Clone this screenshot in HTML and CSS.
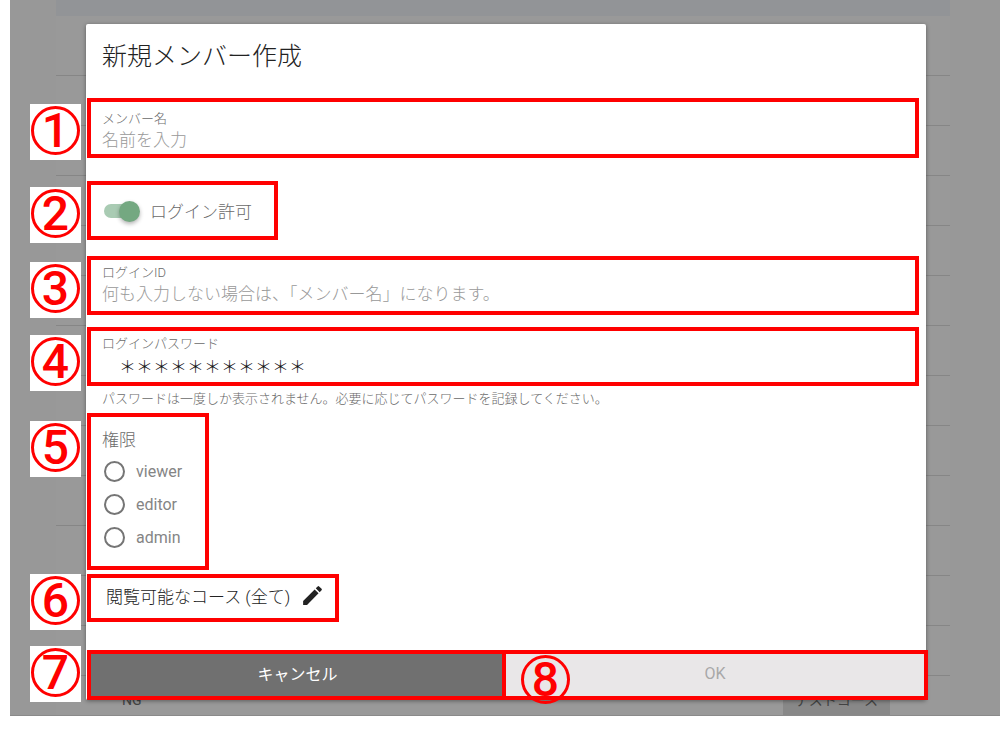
FILE: index.html
```html
<!DOCTYPE html>
<html lang="ja">
<head>
  <meta charset="utf-8">
  <title>新規メンバー作成</title>
  <link rel="stylesheet" href="styles.css">
</head>
<body>
  <div class="screen">

    <!-- member list behind the dialog -->
    <table class="members">
      <thead>
        <tr><th></th><th></th></tr>
      </thead>
      <tbody>
        <tr class="tall"><td></td><td></td></tr>
        <tr><td></td><td></td></tr>
        <tr><td></td><td></td></tr>
        <tr><td></td><td></td></tr>
        <tr><td></td><td></td></tr>
        <tr><td></td><td></td></tr>
        <tr><td></td><td></td></tr>
        <tr><td></td><td></td></tr>
        <tr><td></td><td></td></tr>
        <tr><td></td><td></td></tr>
        <tr><td></td><td></td></tr>
        <tr><td></td><td></td></tr>
        <tr><td></td><td></td></tr>
        <tr><td>NG</td><td><span class="chip">テストコース</span></td></tr>
      </tbody>
    </table>

    <form class="dialog">
      <h1>新規メンバー作成</h1>

      <div class="mark field field-name">
        <span class="badge"><span class="num">1</span></span>
        <label for="name">メンバー名</label>
        <input type="text" id="name" placeholder="名前を入力">
      </div>

      <div class="mark login">
        <span class="badge"><span class="num">2</span></span>
        <input type="checkbox" class="switch" id="login" checked>
        <label for="login">ログイン許可</label>
      </div>

      <div class="mark field">
        <span class="badge"><span class="num">3</span></span>
        <label for="login-id">ログインID</label>
        <input type="text" id="login-id" placeholder="何も入力しない場合は、「メンバー名」になります。">
      </div>

      <div class="mark field field-pass">
        <span class="badge"><span class="num">4</span></span>
        <label for="pass">ログインパスワード</label>
        <input type="text" id="pass" value="　＊＊＊＊＊＊＊＊＊＊＊">
      </div>
      <p class="note">パスワードは一度しか表示されません。必要に応じてパスワードを記録してください。</p>

      <div class="mark roles" role="radiogroup" aria-labelledby="role-title">
        <span class="badge"><span class="num">5</span></span>
        <div class="role-title" id="role-title">権限</div>
        <label><input type="radio" name="role" value="viewer">viewer</label>
        <label><input type="radio" name="role" value="editor">editor</label>
        <label><input type="radio" name="role" value="admin">admin</label>
      </div>

      <div class="mark course">
        <span class="badge"><span class="num">6</span></span>
        <span>閲覧可能なコース (全て)</span>
        <button type="button" class="edit" aria-label="編集">
          <svg viewBox="0 0 24 24" width="25" height="25"><path d="M3 17.25V21h3.75L17.81 9.94l-3.75-3.75L3 17.25zM20.71 7.04a1 1 0 0 0 0-1.41l-2.34-2.34a1 1 0 0 0-1.41 0l-1.83 1.83 3.75 3.75 1.83-1.83z"/></svg>
        </button>
      </div>

      <div class="actions">
        <div class="mark cancel">
          <span class="badge"><span class="num">7</span></span>
          <button type="button">キャンセル</button>
        </div>
        <div class="mark ok">
          <span class="badge"><span class="num">8</span></span>
          <button type="submit" disabled>OK</button>
        </div>
      </div>
    </form>

  </div>
</body>
</html>
```
FILE: styles.css
```css
* {
  box-sizing: border-box;
}

body {
  margin: 0 0 0 10px;
  background-color: #fff;
  font-family: Roboto, "Noto Sans CJK JP", sans-serif;
  font-size: 17px;
  font-weight: 300;
  color: #6a6a6a;
}

input, button {
  margin: 0;
  padding: 0;
  border: none;
  background: none;
  font: inherit;
  color: inherit;
}

.screen {
  position: relative;
  overflow: hidden;
  padding: 24px 74px 15px 76px;
  background-color: #989898;
  border-bottom: 1px solid #8a8a8a;
}

/* Member list */
.members {
  position: absolute;
  top: 0;
  left: 46px;
  right: 50px;
  width: calc(100% - 96px);
  border-collapse: collapse;
  table-layout: fixed;
  background-color: #999;
  color: #444;
  font-size: 14px;
  font-weight: 400;
}

.members th {
  height: 16px;
  padding: 0;
  background-color: #929497;
}

.members td {
  height: 50px;
  padding: 0 60px 0 66px;
  border-bottom: 1px solid #868686;
}

.members .tall td {
  height: 59px;
}

.members td:last-child {
  text-align: right;
}

.chip {
  display: inline-block;
  padding: 0 12px;
  font-size: 14px;
  line-height: 34px;
  background-color: #888;
}

/* Dialog */
.dialog {
  position: relative;
  background-color: #fff;
  border-radius: 2px;
  box-shadow: 0 1px 4px rgba(0, 0, 0, 0.4);
}

h1 {
  margin: 0;
  padding: 15px 16px 23px;
  font-size: 25px;
  font-weight: 300;
  line-height: 36px;
  color: #222;
}

/* Red frame and its number */
.mark {
  position: relative;
  width: fit-content;
  margin-left: 1px;
  border: 4px solid #f00;
}

.badge {
  position: absolute;
  top: 2px;
  left: -61px;
  display: flex;
  justify-content: center;
  width: 51px;
  height: 56px;
  padding-top: 2px;
  background-color: #fff;
}

.num {
  width: 49px;
  height: 49px;
  border: 3px solid #f00;
  border-radius: 50%;
  font-size: 48px;
  font-weight: 500;
  line-height: 43px;
  text-align: center;
  color: #f00;
}

.field {
  display: flex;
  flex-direction: column;
  width: auto;
  margin-right: 7px;
  margin-bottom: 12px;
  padding: 4px 11px 5px;
}

.field label {
  font-size: 13px;
  line-height: 18px;
}

.field input {
  height: 24px;
  outline: none;
}

.field input::placeholder {
  color: #999;
}

.field-name {
  margin-bottom: 23px;
  padding: 8px 11px 2px;
}

.field-pass {
  margin-bottom: 0;
}

.field-pass input {
  color: #111;
}

.field-pass .badge,
.roles .badge {
  top: 4px;
}

.login {
  display: flex;
  align-items: center;
  gap: 12px;
  height: 59px;
  margin-bottom: 16px;
  padding: 0 22px 0 13px;
}

.switch {
  appearance: none;
  position: relative;
  width: 34px;
  height: 14px;
  border-radius: 7px;
  background-color: #a9cbb3;
}

.switch::before {
  content: "";
  position: absolute;
  top: -3px;
  right: -2px;
  width: 21px;
  height: 21px;
  border-radius: 50%;
  background-color: #74a881;
  box-shadow: 0 2px 4px rgba(0, 0, 0, 0.3);
}

.note {
  margin: 0;
  padding: 4px 16px 5px;
  font-size: 13px;
  line-height: 18px;
}

.roles {
  margin-bottom: 4px;
  padding: 10px 23px 12px 11px;
}

.role-title {
  padding-bottom: 2px;
  line-height: 26px;
}

.roles label {
  display: flex;
  align-items: center;
  gap: 11px;
  height: 33px;
  padding-left: 2px;
  font-size: 16px;
  font-weight: 400;
  color: #858585;
}

.roles input {
  appearance: none;
  width: 21px;
  height: 21px;
  border: 2px solid #757575;
  border-radius: 50%;
}

.course {
  display: flex;
  align-items: center;
  gap: 10px;
  height: 48px;
  margin-bottom: 28px;
  padding: 0 10px 5px 15px;
  color: #222;
}

.course .badge {
  top: -4px;
}

.edit {
  display: flex;
  fill: #222;
}

.actions {
  display: flex;
  margin-right: -2px;
}

.actions .mark {
  flex: 1;
  display: flex;
  height: 50px;
}

.actions button {
  flex: 1;
  padding-bottom: 4px;
  font-size: 16px;
  font-weight: 400;
}

.cancel .badge {
  top: -8px;
}

.cancel button {
  background-color: #707070;
  color: #fff;
}

.actions .cancel {
  flex: none;
  width: 50%;
}

.actions .ok {
  margin-left: -6px;
}

.ok button {
  background-color: #e9e7e8;
  color: #a8a8a8;
}

.ok .badge {
  top: -1px;
  left: 14px;
  background: none;
}
```
